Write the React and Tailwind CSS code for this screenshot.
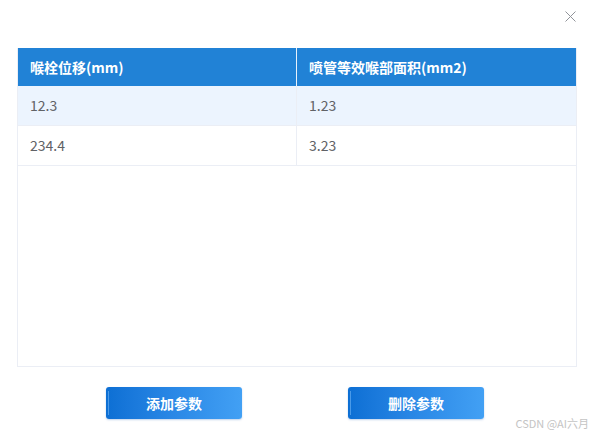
import React from 'react';

const rows = [
  { throat: '12.3', area: '1.23' },
  { throat: '234.4', area: '3.23' },
];

const font = { fontFamily: '"Microsoft YaHei", "Noto Sans CJK SC", "Noto Sans", sans-serif' };

const ParamButton = ({ children }) => (
  <button
    type="button"
    className="relative w-[136px] h-[32px] rounded-[3px] bg-gradient-to-r from-[#0c6fd4] via-[#2a88e6] to-[#42a0f4] text-white text-[14px] font-bold shadow-[0_1px_2px_rgba(0,80,180,0.25)]"
  >
    <span className="absolute left-[2px] top-[4px] bottom-[4px] w-px bg-[#4a9ae8]"></span>
    {children}
  </button>
);

const App = () => {
  return (
    <div className="relative w-[593px] h-[435px] bg-white overflow-hidden" style={font}>
      <div className="h-[48px] flex justify-end items-start pt-[11px] pr-[17px]">
        <svg width="11" height="11" viewBox="0 0 11 11" className="text-[#909399]">
          <path d="M0.5 0.5 L10.5 10.5 M10.5 0.5 L0.5 10.5" stroke="currentColor" strokeWidth="1" fill="none" />
        </svg>
      </div>

      <div className="mx-[17px] w-[560px] h-[319px] border-x border-b border-[#ebeef5] flex flex-col">
        <div className="flex h-[38px] bg-[#2182d6] text-white text-[14px] font-bold">
          <div className="w-[279px] border-r border-[#e8f1fb] flex items-center pl-[12px]">喉栓位移(mm)</div>
          <div className="flex-1 flex items-center pl-[12px]">喷管等效喉部面积(mm2)</div>
        </div>
        {rows.map((r, i) => (
          <div
            key={i}
            className={`flex h-[40px] border-b border-[#ebeef5] text-[14px] text-[#606266] ${i === 0 ? 'bg-[#ecf4fe]' : 'bg-white'}`}
          >
            <div className="w-[279px] border-r border-[#ebeef5] flex items-center pl-[12px]">{r.throat}</div>
            <div className="flex-1 flex items-center pl-[12px]">{r.area}</div>
          </div>
        ))}
      </div>

      <div className="flex pl-[106px] gap-[106px] mt-[20px]">
        <ParamButton>添加参数</ParamButton>
        <ParamButton>删除参数</ParamButton>
      </div>

      <div className="absolute right-[4px] bottom-[4px] text-[11px] text-[#c4c4c4]">CSDN @AI六月</div>
    </div>
  );
};

export default App;
